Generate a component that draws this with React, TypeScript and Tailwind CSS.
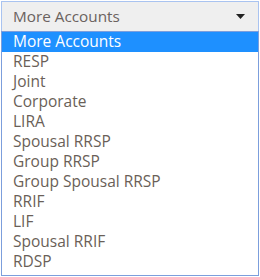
import { useState } from "react";

const options = [
  "More Accounts",
  "RESP",
  "Joint",
  "Corporate",
  "LIRA",
  "Spousal RRSP",
  "Group RRSP",
  "Group Spousal RRSP",
  "RRIF",
  "LIF",
  "Spousal RRIF",
  "RDSP",
];

export default function App() {
  const [selected] = useState("More Accounts");

  return (
    <div
      className="w-[260px] h-[277px] bg-white pl-px pt-px"
      style={{ fontFamily: '"Open Sans", "Liberation Sans", sans-serif' }}
    >
      <div className="w-[258px]">
        {/* Select box */}
        <div className="h-[30px] flex items-center justify-between bg-[#efefef] border border-b-0 border-[#a9c3f0] pl-[11px] pr-[13px] text-[15.3px] text-[#6a625e]">
          <span className="-mt-px">{selected}</span>
          <svg width="9" height="5" viewBox="0 0 9 5">
            <path d="M0 0h9L4.5 5z" fill="#222" />
          </svg>
        </div>

        {/* Options */}
        <div className="border border-[#7c9edc] pb-[3px]">
          {options.map((opt) => (
            <div
              key={opt}
              className={
                opt === selected
                  ? "h-5 flex items-center pl-[11px] pb-px text-[15.5px] bg-[#1e90ff] text-white"
                  : "h-5 flex items-center pl-[11px] pb-px text-[15.5px] text-[#6a5f58]"
              }
            >
              {opt}
            </div>
          ))}
        </div>
      </div>
    </div>
  );
}
